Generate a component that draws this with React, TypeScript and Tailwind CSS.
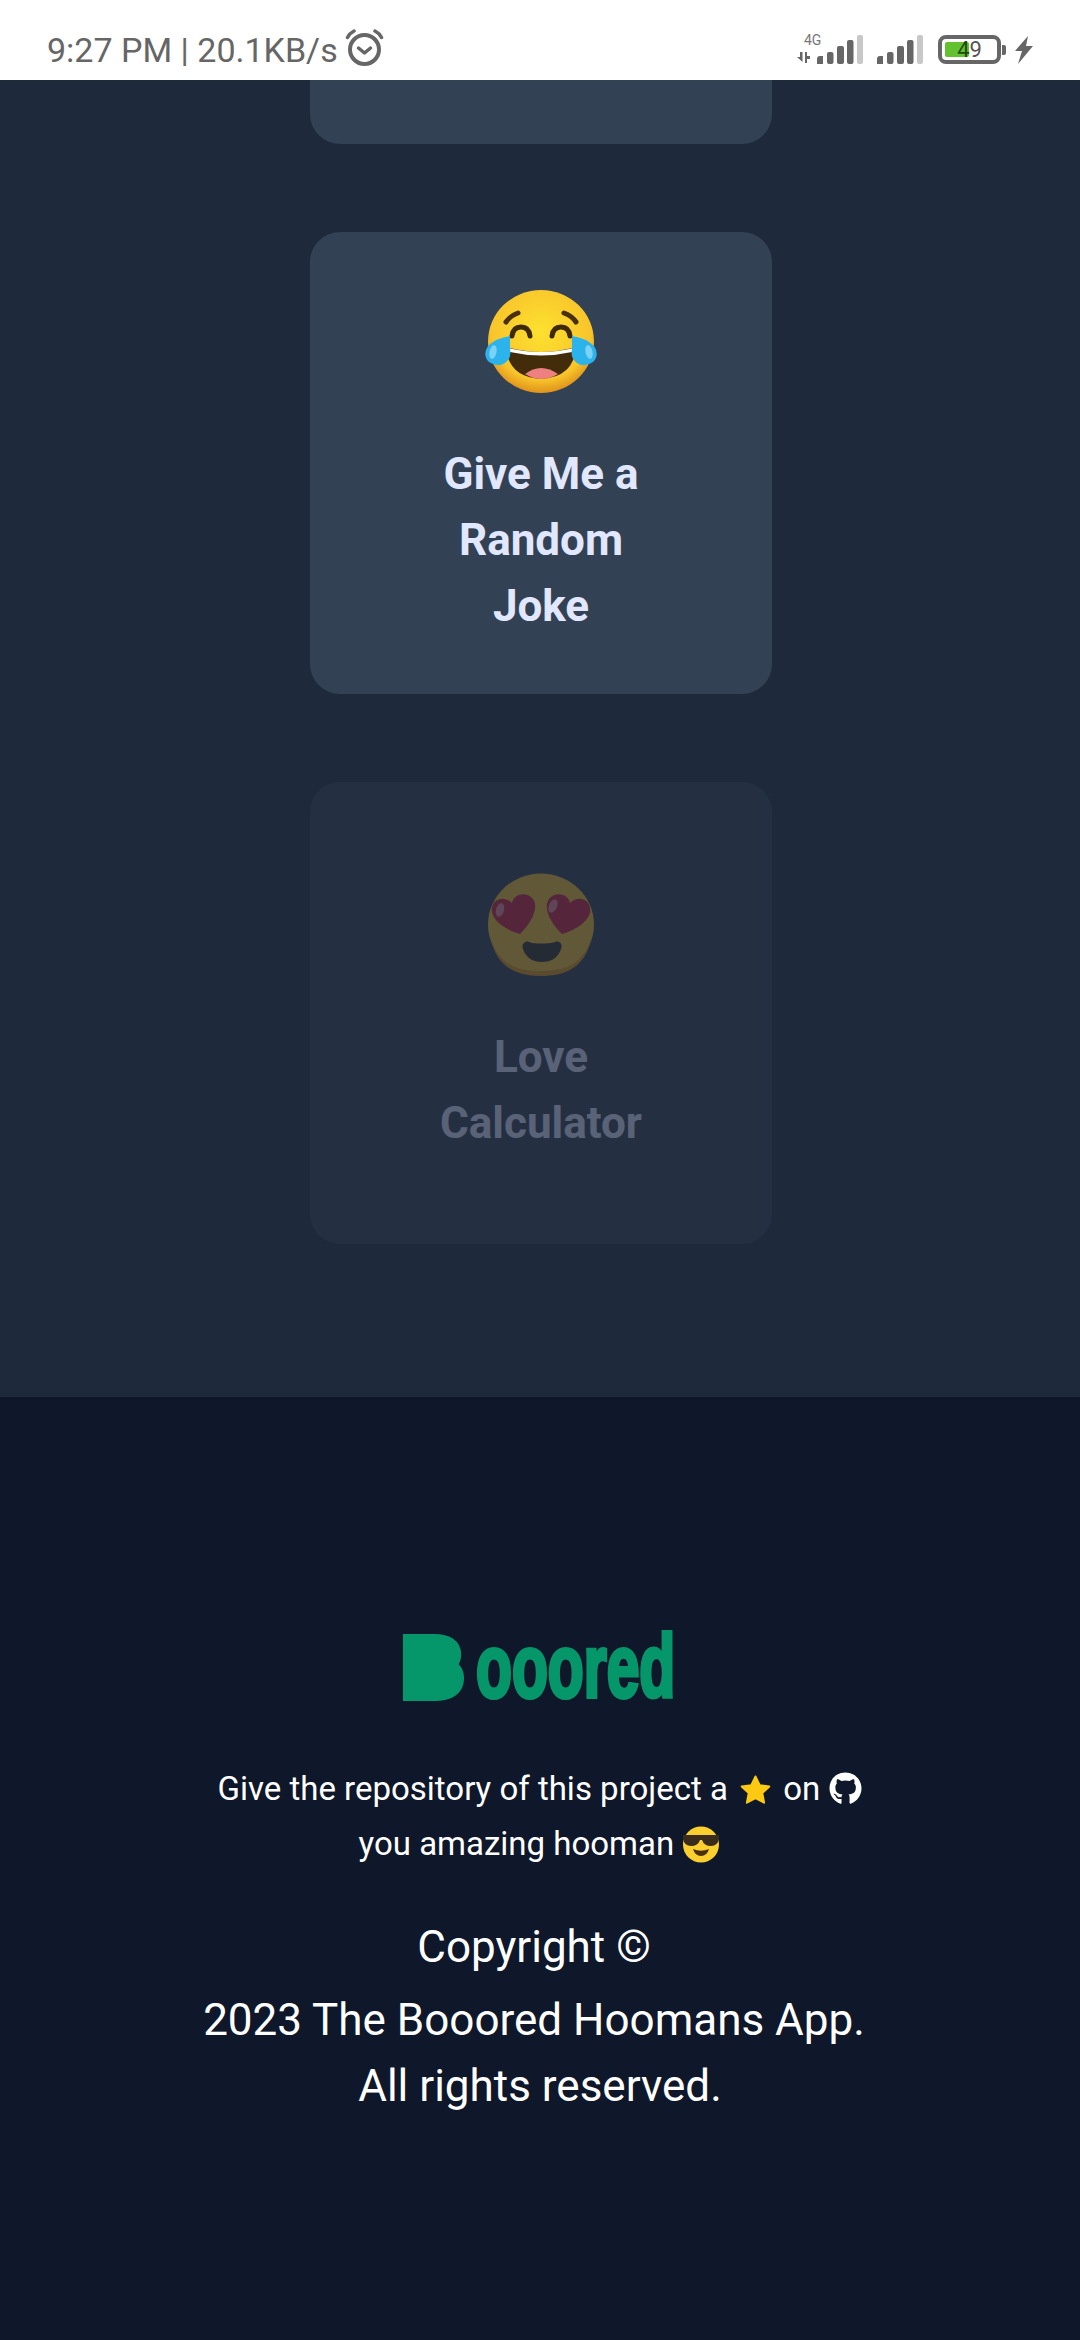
import { FaGithub } from "react-icons/fa";
import type { ReactNode } from "react";

const font = { fontFamily: "Roboto, sans-serif" };
const logoFont = { fontFamily: "'Liberation Sans', sans-serif" };

function Alarm() {
  return (
    <svg width="40" height="38" viewBox="0 0 40 38" fill="none" stroke="#666" strokeLinecap="round" className="ml-[7px] mt-[-4px]">
      <circle cx="19.5" cy="20.5" r="14.5" strokeWidth="4" />
      <path d="M13.5 19l6 5 6-5" strokeWidth="3.5" strokeLinejoin="round" />
      <path d="M2.5 8.5C4 5.5 6 3.5 9 2" strokeWidth="3.5" />
      <path d="M36.5 8.5C35 5.5 33 3.5 30 2" strokeWidth="3.5" />
    </svg>
  );
}

function Bars() {
  return (
    <svg width="46" height="29" viewBox="0 0 46 29">
      <path d="M0 29v-5q0-3 3-3h3v8z" fill="#666" />
      <rect x="10" y="17" width="6.5" height="12" rx="2" fill="#666" />
      <rect x="20" y="11" width="7" height="18" rx="2" fill="#666" />
      <rect x="30" y="5" width="6.5" height="24" rx="2" fill="#666" />
      <rect x="40" y="0" width="6" height="29" rx="2" fill="#c8c8c8" />
    </svg>
  );
}

function Right() {
  return (
    <div className="flex items-end pb-[16px]">
      <div className="relative flex items-end gap-[4px]">
        <span className="absolute left-[7px] top-[-2px] text-[14px] leading-none text-[#777]" style={font}>4G</span>
        <svg width="16" height="11" viewBox="0 0 16 11" className="mb-[1px]">
          <path d="M0 5h3V0h2.500v10zM8 0h2v4h3v3h-3v4H8z" fill="#666" />
        </svg>
        <Bars />
      </div>
      <div className="ml-[14px]"><Bars /></div>
      <div className="ml-[15px] flex items-center">
        <div className="relative h-[29px] w-[63px] rounded-[8px] border-[4px] border-[#666] bg-white">
          <div className="absolute left-[3px] top-[3px] h-[15px] w-[24px] rounded-[2px] bg-[#63c130]" />
          <div className="absolute inset-0 flex items-center justify-center text-[22px] leading-none" style={font}>
            <span className="text-[#1f4a0f]">4</span><span className="text-[#555]">9</span>
          </div>
        </div>
        <div className="ml-[1px] h-[10px] w-[4px] rounded-r-[2px] bg-[#666]" />
        <svg width="20" height="28" viewBox="0 0 20 28" className="ml-[8px]"><path d="M14 0L1 15h7l-4 13L19 10h-7z" fill="#666" /></svg>
      </div>
    </div>
  );
}

function Joy() {
  return (
    <svg width="114" height="110" viewBox="0 0 114 110">
      <defs>
        <radialGradient id="joyf" cx="50%" cy="40%" r="60%">
          <stop offset="0%" stopColor="#fde12f" />
          <stop offset="78%" stopColor="#f8c52b" />
          <stop offset="100%" stopColor="#e0921a" />
        </radialGradient>
      </defs>
      <ellipse cx="57" cy="54.500" rx="53" ry="51.500" fill="url(#joyf)" />
      <path d="M22 35q4-6 12-9M92 35q-4-6-12-9" stroke="#4a2f0b" strokeWidth="5" strokeLinecap="round" fill="none" />
      <path d="M28 49q1-9 9-9t9 9M68 49q1-9 9-9t9 9" stroke="#3f2a08" strokeWidth="5" strokeLinecap="round" fill="none" />
      <path d="M22 60q35 10 70 0q-2 30-35 32q-33-2-35-32z" fill="#432c09" />
      <path d="M41 87q16-12 33 0q-8 5-16.500 5q-8.500 0-16.500-5z" fill="#ee8080" />
      <path d="M24 61q33 8 66 0l-2 4q-31 7-62 0z" fill="#fff" />
      <path d="M26 49q-14 2-22 10q-6 9 1 16q9 6 16 1q7-5 5-14z" fill="#2cb3ec" />
      <path d="M88 49q14 2 22 10q6 9-1 16q-9 6-16 1q-7-5-5-14z" fill="#2cb3ec" />
      <ellipse cx="9" cy="65" rx="3.500" ry="7" fill="#7bd2f6" transform="rotate(12 9 65)" />
      <ellipse cx="105" cy="65" rx="3.500" ry="7" fill="#7bd2f6" transform="rotate(-12 105 65)" />
    </svg>
  );
}

function HeartEyes() {
  const heart = "M36 64C22 60 6 50 8 38C9 29 20 25 28 33C30 24 42 21 49 29C55 38 48 52 36 64z";
  return (
    <svg width="114" height="110" viewBox="0 0 114 110">
      <ellipse cx="57" cy="54.500" rx="53" ry="51" fill="#f8c52b" />
      <path d="M6 60q3 46 51 46q48 0 51-46q-3 41-51 41q-48 0-51-41z" fill="#e59a14" />
      <path d="M45 72c4 2 20 2 26 0c5-2 8 3 6 7c-3 9-10 13-19 13s-16-4-19-13c-2-4 2-9 6-7z" fill="#38302a" />
      <path d={heart} fill="#d5213c" />
      <path d={heart} fill="#d5213c" transform="translate(114 0) scale(-1 1)" />
      <ellipse cx="16" cy="40" rx="4" ry="7" fill="#f28b9b" transform="rotate(15 16 40)" />
      <ellipse cx="69" cy="36" rx="4" ry="7" fill="#f28b9b" transform="rotate(25 69 36)" />
    </svg>
  );
}

function Star() {
  return (
    <svg width="31" height="30" viewBox="0 0 31 30" className="mx-[4px] inline-block align-[-5px]">
      <path d="M15.500 1.500l4.200 8.800 9.600 1.200-7 6.600 1.800 9.600-8.600-4.700-8.600 4.700 1.800-9.600-7-6.600 9.600-1.200z" fill="#fcca12" stroke="#fcca12" strokeWidth="2" strokeLinejoin="round" />
    </svg>
  );
}

function Cool() {
  return (
    <svg width="38" height="37" viewBox="0 0 38 37" className="inline-block align-[-8px]">
      <ellipse cx="19" cy="18.500" rx="18" ry="18" fill="#fbcf2e" />
      <path d="M1 9h36v3q-1 8-8 8-7 0-9-6h-2q-2 6-9 6-7 0-8-8z" fill="#3a2c1a" />
      <path d="M11 23q8 3.500 16 0q-2 7-8 7t-8-7z" fill="#4a2f0b" />
    </svg>
  );
}

function Card({ emoji, lines, dim }: { emoji: ReactNode; lines: string; dim?: boolean }) {
  return (
    <div className={`flex h-[462px] w-[462px] flex-col items-center justify-center rounded-[30px] bg-[#334155] ${dim ? "opacity-30" : ""}`}>
      {emoji}
      <p className="mt-[44px] w-[240px] text-center text-[44px] font-bold leading-[66px] text-[#e0e7ff]" style={font}>{lines}</p>
    </div>
  );
}

export default function App() {
  return (
    <div className="flex h-[2340px] w-[1080px] flex-col overflow-hidden bg-[#0f172a]" style={font}>
      <header className="flex h-[80px] shrink-0 items-end justify-between bg-white pl-[47px] pr-[46px]">
        <div className="flex items-center pb-[10px] text-[34px] leading-[40px] text-[#666]">
          <span>9:27 PM | 20.1KB/s</span>
          <Alarm />
        </div>
        <Right />
      </header>
      <main className="flex h-[1317px] shrink-0 flex-col items-center gap-[88px] bg-[#1e293b] pl-[2px]">
        <div className="h-[64px] w-[462px] shrink-0 rounded-b-[30px] bg-[#334155]" />
        <Card emoji={<Joy />} lines="Give Me a Random Joke" />
        <Card emoji={<HeartEyes />} lines="Love Calculator" dim />
      </main>
      <footer className="flex grow flex-col items-center pt-[238px] text-white">
        <div className="mr-[5px] flex h-[66px] w-[269px] items-end text-[#059669]" style={logoFont}>
          <span className="block h-[66px] w-[73px] shrink-0 pl-[3px] text-[74px] font-bold leading-[66px] [-webkit-text-stroke:16px_#059669]">B</span>
          <span className="block w-[196px] origin-bottom-left scale-x-[0.7] scale-y-[1.05] whitespace-nowrap text-[84px] font-bold leading-[66px] [-webkit-text-stroke:4px_#059669]">ooored</span>
        </div>
        <p className="mt-[60px] w-[680px] pr-[1px] text-center text-[33px] leading-[55px]">
          Give the repository of this project a <Star /> on <FaGithub className="inline-block align-[-5px]" size={33} /> you amazing hooman <Cool />
        </p>
        <div className="mt-[43px] text-center text-[44px] leading-[66px]">
          <p className="mb-[7px] pr-[12px]">Copyright ©</p>
          <p className="pr-[12px]">2023 The Booored Hoomans App.</p>
          <p>All rights reserved.</p>
        </div>
      </footer>
    </div>
  );
}
